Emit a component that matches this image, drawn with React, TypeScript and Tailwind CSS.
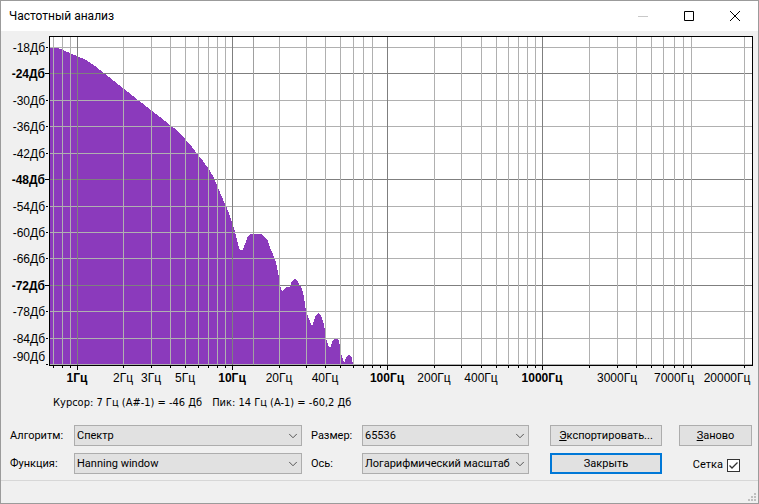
import React from 'react';
import { ChevronDown } from 'lucide-react';

interface Tick {
  at: number;
  label?: string;
  major?: boolean;
  labelAt?: number;
  noLine?: boolean;
}

const LEVELS: Tick[] = [
  { at: 47, label: '-18Дб' },
  { at: 73, label: '-24Дб', major: true },
  { at: 100, label: '-30Дб' },
  { at: 126, label: '-36Дб' },
  { at: 153, label: '-42Дб' },
  { at: 179, label: '-48Дб', major: true },
  { at: 206, label: '-54Дб' },
  { at: 232, label: '-60Дб' },
  { at: 258, label: '-66Дб' },
  { at: 285, label: '-72Дб', major: true },
  { at: 311, label: '-78Дб' },
  { at: 338, label: '-84Дб' },
  { at: 364, label: '-90Дб', labelAt: 356 },
];

const FREQUENCIES: Tick[] = [
  { at: 53 },
  { at: 62 },
  { at: 70 },
  { at: 77, label: '1Гц', major: true },
  { at: 123, label: '2Гц' },
  { at: 151, label: '3Гц' },
  { at: 170 },
  { at: 185, label: '5Гц' },
  { at: 198 },
  { at: 208 },
  { at: 217 },
  { at: 225 },
  { at: 232, label: '10Гц', major: true },
  { at: 279, label: '20Гц' },
  { at: 306 },
  { at: 325, label: '40Гц' },
  { at: 340 },
  { at: 353 },
  { at: 363 },
  { at: 372 },
  { at: 380, noLine: true },
  { at: 387, label: '100Гц', major: true },
  { at: 434, label: '200Гц' },
  { at: 461 },
  { at: 481, label: '400Гц' },
  { at: 496 },
  { at: 508 },
  { at: 518 },
  { at: 527 },
  { at: 535 },
  { at: 542, label: '1000Гц', major: true },
  { at: 589 },
  { at: 617, label: '3000Гц' },
  { at: 636 },
  { at: 651 },
  { at: 663 },
  { at: 674, label: '7000Гц' },
  { at: 683 },
  { at: 691 },
  { at: 744, label: '20000Гц', labelAt: 727 },
];

const SPECTRUM =
  'M50 365V48H57L63 50L70 53L77 56L86 60L95 66L104 73L114 81L123 88L138 100L151 110L160 117L170 125L178 131L185 139L192 147L198 155L203 161L208 168L213 176L217 185L221 195L225 204L229 213L232 222L235 232L238 244L240 250L243 250L245 244L248 236L251 234H261L264 236L268 241L271 250L275 259L277 267L279 277L281 290L283 291L286 287L290 287L292 281L295 279L298 282L302 289L304 297L306 311L309 319L312 326L314 321L316 315L319 313L321 316L324 324L326 338L328 345L330 348L333 340L336 337L339 341L341 353L344 363L346 358L349 354L352 358L353 365Z';

const Spectrum: React.FC = () => (
  <svg
    viewBox="1 31 757 360"
    className="block w-full font-['Liberation_Sans',Arial,sans-serif]"
    role="img"
    aria-label="Спектр"
    shapeRendering="crispEdges"
  >
    <rect x="49" y="36" width="704" height="330" fill="#fff" />
    <path d={SPECTRUM} fill="#8b3abc" />
    {LEVELS.map((t) => (
      <rect key={t.at} x="50" y={t.at} width="702" height="1" fill={t.major ? '#7f7f7f' : '#b0b0b0'} />
    ))}
    {FREQUENCIES.filter((t) => !t.noLine).map((t) => (
      <rect key={t.at} x={t.at} y="37" width="1" height="328" fill={t.major ? '#7f7f7f' : '#b0b0b0'} />
    ))}
    <rect x="253" y="37" width="1" height="328" fill="#a0a0a0" />
    <rect x="49.5" y="36.5" width="703" height="329" fill="none" stroke="#000" />
    {LEVELS.map((t) => (
      <rect key={t.at} x={t.major ? 45 : 46} y={t.at} width={t.major ? 4 : 2} height="1" />
    ))}
    {FREQUENCIES.map((t) => (
      <rect key={t.at} x={t.at} y="366" width="1" height={t.major ? 4 : 2} />
    ))}
    {LEVELS.map((t) => (
      <text
        key={t.at}
        x="45"
        y={(t.labelAt ?? t.at) + 5}
        textAnchor="end"
        fontSize="12"
        fontWeight={t.major ? 700 : 400}
      >
        {t.label}
      </text>
    ))}
    {FREQUENCIES.filter((t) => t.label).map((t) => (
      <text
        key={t.at}
        x={t.labelAt ?? t.at}
        y="382"
        textAnchor="middle"
        fontSize="12"
        fontWeight={t.major ? 700 : 400}
      >
        {t.label}
      </text>
    ))}
  </svg>
);

interface ChoiceProps {
  id: string;
  label: string;
  value: string;
  labelClass: string;
}

const Choice: React.FC<ChoiceProps> = ({ id, label, value, labelClass }) => (
  <div className="flex items-center">
    <label htmlFor={id} className={labelClass}>
      {label}
    </label>
    <div className="relative min-w-0 flex-1">
      <select
        id={id}
        className="block h-[21px] w-full appearance-none border border-[#adadad] bg-[#e1e1e1] pr-4 pl-[2px] leading-4"
      >
        <option>{value}</option>
      </select>
      <ChevronDown
        strokeWidth={1.5}
        className="pointer-events-none absolute top-1 right-[2px] size-[14px] text-[#404040]"
      />
    </div>
  </div>
);

const App: React.FC = () => {
  return (
    <div className="flex min-h-screen flex-col border border-[#9b9b9b] bg-[#f0f0f0] font-[Roboto,sans-serif] text-[11px] text-black">
      <header className="flex h-[30px] items-center justify-between bg-white pl-2">
        <h1 className="text-xs">Частотный анализ</h1>
        <div className="flex h-full">
          <button aria-label="Свернуть" disabled className="flex w-[46px] items-center justify-center text-[#c8c8c8]">
            <svg className="size-[10px]" viewBox="0 0 10 10" stroke="currentColor">
              <path d="M0 5.5H10" />
            </svg>
          </button>
          <button aria-label="Развернуть" className="flex w-[46px] items-center justify-center">
            <svg className="size-[10px]" viewBox="0 0 10 10" fill="none" stroke="currentColor">
              <path d="M.5.5H9.5V9.5H.5Z" />
            </svg>
          </button>
          <button aria-label="Закрыть окно" className="flex w-[46px] items-center justify-center">
            <svg className="size-[10px]" viewBox="0 0 10 10" stroke="currentColor">
              <path d="M0 0L10 10M10 0L0 10" />
            </svg>
          </button>
        </div>
      </header>

      <main>
        <Spectrum />
        <p className="flex h-6 items-center gap-[10px] pl-[52px] font-['DejaVu_Sans_Condensed','DejaVu_Sans',sans-serif]">
          <span>Курсор: 7 Гц (A#-1) = -46 Дб</span>
          <span>Пик: 14 Гц (A-1) = -60,2 Дб</span>
        </p>
        <form
          className="mt-[10px] flex items-start pr-[6px] pb-[3px] pl-[9px]"
          onSubmit={(e) => e.preventDefault()}
        >
          <div className="flex flex-[292] flex-col gap-[7px]">
            <Choice id="algorithm" label="Алгоритм:" value="Спектр" labelClass="w-16 pt-[2px]" />
            <Choice id="window" label="Функция:" value="Hanning window" labelClass="w-16 pt-[2px]" />
          </div>
          <div className="ml-[9px] flex flex-[218] flex-col gap-[7px]">
            <Choice id="size" label="Размер:" value="65536" labelClass="w-[51px] pt-[2px]" />
            <Choice id="axis" label="Ось:" value="Логарифмический масштаб" labelClass="w-[51px] pt-[2px]" />
          </div>
          <div className="ml-[21px] flex w-28 flex-col gap-[7px]">
            <button className="h-[21px] border border-[#adadad] bg-[#e1e1e1] leading-4">
              <u>Э</u>кспортировать...
            </button>
            <button className="h-[21px] border-2 border-[#0078d7] bg-[#e1e1e1] leading-4">Закрыть</button>
          </div>
          <div className="ml-[17px] flex w-[73px] flex-col gap-[7px]">
            <button className="h-[21px] border border-[#adadad] bg-[#e1e1e1] leading-4">
              <u>З</u>аново
            </button>
            <label className="flex h-6 items-center justify-end gap-1 pr-3">
              Сетка
              <span className="relative flex">
                <input
                  type="checkbox"
                  defaultChecked
                  className="peer size-[13px] appearance-none border border-[#333] bg-white"
                />
                <svg
                  className="pointer-events-none absolute inset-0 hidden size-[13px] peer-checked:block"
                  viewBox="0 0 13 13"
                  fill="none"
                  stroke="#333"
                  strokeWidth="1.3"
                >
                  <path d="M2.5 6.5L5 9L10.5 3.5" />
                </svg>
              </span>
            </label>
          </div>
        </form>
      </main>

      <footer className="flex flex-1 items-end justify-end border-t border-[#d7d7d7] p-[2px]">
        <svg className="size-2" viewBox="0 0 8 8" fill="#bfbfbf">
          <path d="M6 0h2v2H6zM3 3h2v2H3zM6 3h2v2H6zM0 6h2v2H0zM3 6h2v2H3zM6 6h2v2H6z" />
        </svg>
      </footer>
    </div>
  );
};

export default App;
